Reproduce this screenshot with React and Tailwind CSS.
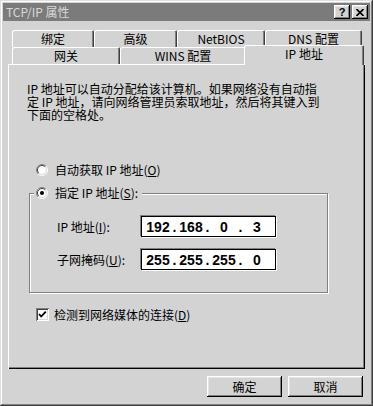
import React from 'react';

const raised =
  'shadow-[inset_-1px_-1px_0_#000,inset_1px_1px_0_#fff,inset_-2px_-2px_0_#808080,inset_2px_2px_0_#e4e4e4]';
const tabEdge = 'shadow-[inset_1px_1px_0_#fff,inset_-1px_0_0_#404040,inset_-2px_0_0_#808080]';

function Radio({ checked }) {
  return (
    <svg width="12" height="12" viewBox="0 0 12 12" className="shrink-0">
      <circle cx="6" cy="6" r="5" fill="#fff" />
      <path d="M9.9 2.1 A5.5 5.5 0 0 0 2.1 9.9" stroke="#808080" fill="none" />
      <path d="M2.1 9.9 A5.5 5.5 0 0 0 9.9 2.1" stroke="#fff" fill="none" />
      <path d="M9.2 2.8 A4.5 4.5 0 0 0 2.8 9.2" stroke="#404040" fill="none" />
      <path d="M2.8 9.2 A4.5 4.5 0 0 0 9.2 2.8" stroke="#dcdcdc" fill="none" />
      {checked && <circle cx="6" cy="6" r="2" fill="#000" />}
    </svg>
  );
}

function Checkbox() {
  return (
    <div className="w-[13px] h-[13px] bg-white shrink-0 shadow-[inset_1px_1px_0_#808080,inset_-1px_-1px_0_#fff,inset_2px_2px_0_#404040,inset_-2px_-2px_0_#dcdcdc]">
      <svg width="13" height="13" viewBox="0 0 13 13">
        <polyline points="3,6 5.2,8.5 9.8,3.6" stroke="#000" strokeWidth="1.8" fill="none" />
      </svg>
    </div>
  );
}

function IpBox({ parts }) {
  return (
    <div className="w-[135px] h-[21px] bg-white border border-black shadow-[-1px_-1px_0_#808080,1px_1px_0_#fff] flex items-center pl-[2px] font-['Liberation_Sans',sans-serif] font-bold text-[14px] leading-none">
      {parts.map((p, i) => (
        <React.Fragment key={i}>
          <span className="w-[28px] text-center">{p}</span>
          {i < 3 && <span className="w-[5px] text-center">.</span>}
        </React.Fragment>
      ))}
    </div>
  );
}

export default function App() {
  return (
    <div className="w-[373px] h-[406px] bg-[#d3d3d3] text-black text-[12px] leading-[14px] font-['Noto_Sans_CJK_SC',sans-serif] shadow-[inset_-1px_-1px_0_#404040,inset_1px_1px_0_#dfdfdf,inset_-2px_-2px_0_#808080,inset_2px_2px_0_#fff] flex flex-col overflow-hidden">
      {/* Title bar */}
      <div className="mx-[3px] mt-[3px] h-[18px] bg-[#7b7b7b] flex items-center justify-between pl-[3px] pr-[2px]">
        <span className="text-[#d8d8d8] text-[12px]">TCP/IP 属性</span>
        <div className="flex gap-[2px]">
          <div className={`w-[16px] h-[14px] bg-[#d3d3d3] flex items-center justify-center font-['Liberation_Sans',sans-serif] font-bold text-[11px] ${raised}`}>?</div>
          <div className={`w-[16px] h-[14px] bg-[#d3d3d3] flex items-center justify-center ${raised}`}>
            <svg width="8" height="7" viewBox="0 0 8 7">
              <path d="M0.5 0 L7.5 7 M7.5 0 L0.5 7" stroke="#000" strokeWidth="1.6" />
            </svg>
          </div>
        </div>
      </div>

      {/* Tabs */}
      <div className="mt-[9px] ml-[12px] flex h-[17px]">
        <div className={`w-[82px] rounded-t-[2px] flex items-center justify-center ${tabEdge}`}>绑定</div>
        <div className={`w-[83px] rounded-t-[2px] flex items-center justify-center ${tabEdge}`}>高级</div>
        <div className={`w-[88px] rounded-t-[2px] flex items-center justify-center ${tabEdge}`}>NetBIOS</div>
        <div className={`w-[97px] rounded-t-[2px] flex items-center justify-center ${tabEdge}`}>DNS 配置</div>
      </div>
      <div className="ml-[12px] flex items-end h-[17px]">
        <div className={`w-[108px] h-[17px] rounded-t-[2px] flex items-center justify-center ${tabEdge}`}>网关</div>
        <div className={`w-[126px] h-[17px] rounded-t-[2px] flex items-center justify-center ${tabEdge}`}>WINS 配置</div>
        <div className={`relative z-10 -ml-[2px] -mb-px w-[120px] h-[20px] bg-[#d3d3d3] rounded-t-[2px] flex items-start pt-[2px] justify-center ${tabEdge}`}>IP 地址</div>
      </div>

      {/* Panel */}
      <div className="ml-[8px] w-[357px] h-[305px] pl-[19px] pt-[18px] flex flex-col shadow-[inset_1px_1px_0_#fff,inset_-1px_-1px_0_#000,inset_-2px_-2px_0_#808080]">
        <div className="text-[12px] leading-[13px] whitespace-nowrap">
          <div className="h-[13px]">IP 地址可以自动分配给该计算机。如果网络没有自动指</div>
          <div className="h-[13px]">定 IP 地址，请向网络管理员索取地址，然后将其键入到</div>
          <div className="h-[13px]">下面的空格处。</div>
        </div>

        <div className="mt-[42px] ml-[9px] h-[14px] flex items-center gap-[7px]">
          <Radio />
          <span>
            自动获取 IP 地址(<span className="underline">O</span>)
          </span>
        </div>

        <fieldset className="mt-[9px] ml-[2px] w-[299px] border border-[#808080] shadow-[inset_1px_1px_0_#fff,1px_1px_0_#fff] pl-[27px] pt-[16px] pb-[22px]">
          <legend className="-ml-[23px] pl-[2px] pr-[4px] h-[14px] bg-[#d3d3d3] flex items-center gap-[7px]">
            <Radio checked />
            <span>
              指定 IP 地址(<span className="underline">S</span>):
            </span>
          </legend>
          <div className="flex items-center h-[21px]">
            <span className="w-[84px]">
              IP 地址(<span className="underline">I</span>):
            </span>
            <IpBox parts={['192', '168', '0', '3']} />
          </div>
          <div className="mt-[12px] flex items-center h-[21px]">
            <span className="w-[84px]">
              子网掩码(<span className="underline">U</span>):
            </span>
            <IpBox parts={['255', '255', '255', '0']} />
          </div>
        </fieldset>

        <div className="mt-[15px] ml-[9px] h-[13px] flex items-center gap-[5px]">
          <Checkbox />
          <span>
            检测到网络媒体的连接(<span className="underline">D</span>)
          </span>
        </div>
      </div>

      {/* Buttons */}
      <div className="mt-[7px] pr-[10px] flex justify-end gap-[6px]">
        <div className={`w-[75px] h-[21px] flex items-center justify-center ${raised}`}>确定</div>
        <div className={`w-[75px] h-[21px] flex items-center justify-center ${raised}`}>取消</div>
      </div>
    </div>
  );
}
